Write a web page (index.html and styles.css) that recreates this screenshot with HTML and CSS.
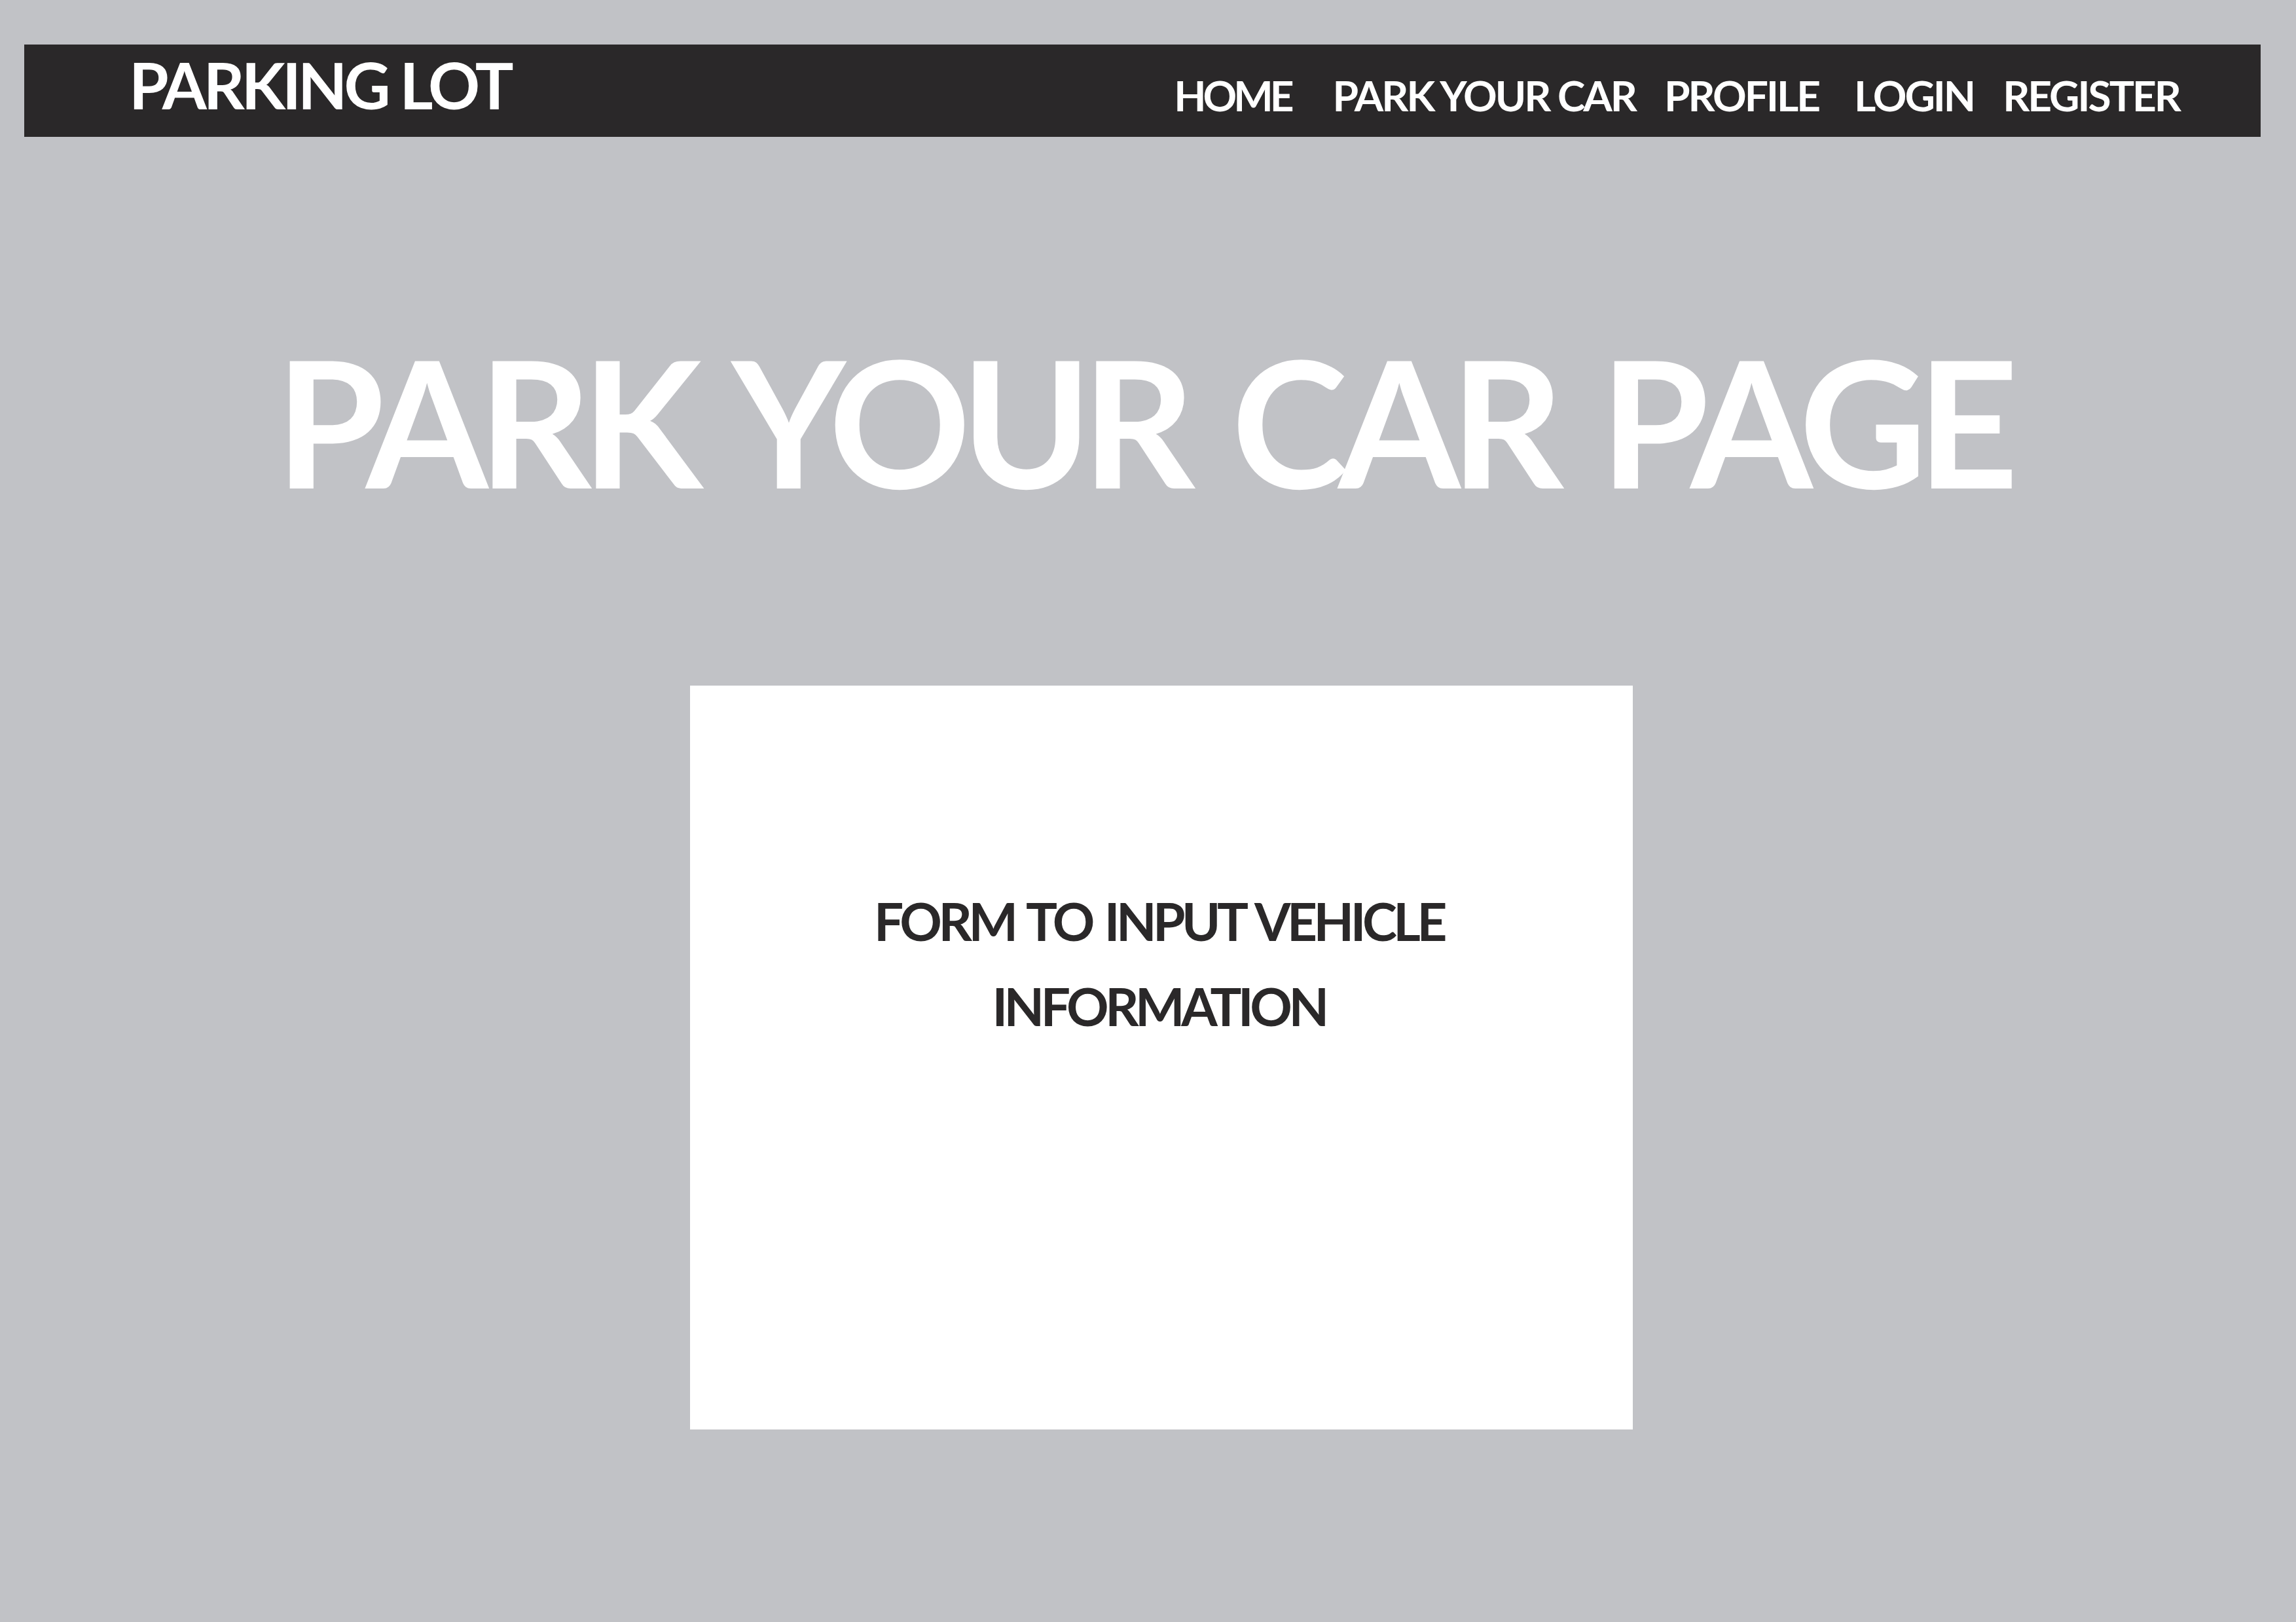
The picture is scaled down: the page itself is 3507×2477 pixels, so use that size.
FILE: index.html
```html
<!DOCTYPE html>
<html lang="en">
<head>
<meta charset="utf-8">
<title>Parking Lot - Park Your Car</title>
<link rel="stylesheet" href="styles.css">
</head>
<body>
<header class="nav">
  <div class="brand">PARKING LOT</div>
  <nav class="links">
    <a class="link link-home" href="#">HOME</a>
    <a class="link" href="#">PARK YOUR CAR</a>
    <a class="link link-profile" href="#">PROFILE</a>
    <a class="link" href="#">LOGIN</a>
    <a class="link" href="#">REGISTER</a>
  </nav>
</header>
<main class="main">
  <h1 class="title">PARK YOUR CAR PAGE</h1>
  <section class="form-box">
    <p class="form-text">FORM TO INPUT VEHICLE<br>INFORMATION</p>
  </section>
</main>
</body>
</html>
```
FILE: styles.css
```css
html, body {
  margin: 0;
  padding: 0;
}
body {
  background: #c1c2c6;
  width: 3507px;
  height: 2477px;
  overflow: hidden;
  font-family: "Lato", "Liberation Sans", sans-serif;
  font-weight: 700;
}
.nav {
  margin: 68px 54px 0 37px;
  height: 141px;
  background: #2a2829;
  display: flex;
  justify-content: space-between;
  align-items: flex-start;
  padding: 0 124px 0 160px;
  box-sizing: border-box;
}
.brand {
  color: #ffffff;
  font-size: 98px;
  line-height: 1;
  letter-spacing: -5px;
  margin-top: 12px;
  white-space: nowrap;
}
.links {
  display: flex;
  gap: 44px;
  margin-top: 46px;
}
.link {
  color: #ffffff;
  text-decoration: none;
  font-size: 64px;
  line-height: 1;
  letter-spacing: -3px;
  white-space: nowrap;
}
.link-home {
  margin-right: 20px;
  letter-spacing: -5px;
}
.link-profile {
  margin-right: 10px;
}
.main {
  display: flex;
  flex-direction: column;
  align-items: center;
}
.title {
  margin: 298px 0 0 -18px;
  color: #ffffff;
  font-size: 269px;
  line-height: 1;
  font-weight: 700;
  letter-spacing: -15px;
  word-spacing: 20px;
  white-space: nowrap;
}
.form-box {
  margin-top: 271px;
  margin-left: 41px;
  width: 1440px;
  height: 1136px;
  background: #ffffff;
  box-sizing: border-box;
  padding-top: 294px;
}
.form-text {
  margin: 0;
  color: #2a2829;
  font-size: 80px;
  line-height: 130px;
  letter-spacing: -5.5px;
  word-spacing: 6px;
  text-align: center;
  padding-right: 8px;
}
```
